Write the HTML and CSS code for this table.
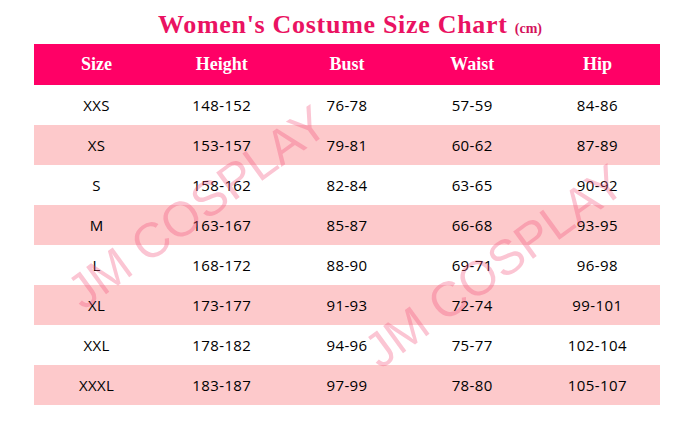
FILE: index.html
```html
<!DOCTYPE html>
<html>
<head>
<meta charset="utf-8">
<link rel="stylesheet" href="styles.css">
</head>
<body>
<div class="page">
  <h1 class="title">Women's Costume Size Chart <small class="unit">(cm)</small></h1>
  <div class="chart">
    <div class="row head">
      <div>Size</div><div>Height</div><div>Bust</div><div>Waist</div><div>Hip</div>
    </div>
    <div class="row"><div>XXS</div><div>148-152</div><div>76-78</div><div>57-59</div><div>84-86</div></div>
    <div class="row alt"><div>XS</div><div>153-157</div><div>79-81</div><div>60-62</div><div>87-89</div></div>
    <div class="row"><div>S</div><div>158-162</div><div>82-84</div><div>63-65</div><div>90-92</div></div>
    <div class="row alt"><div>M</div><div>163-167</div><div>85-87</div><div>66-68</div><div>93-95</div></div>
    <div class="row"><div>L</div><div>168-172</div><div>88-90</div><div>69-71</div><div>96-98</div></div>
    <div class="row alt"><div>XL</div><div>173-177</div><div>91-93</div><div>72-74</div><div>99-101</div></div>
    <div class="row"><div>XXL</div><div>178-182</div><div>94-96</div><div>75-77</div><div>102-104</div></div>
    <div class="row alt"><div>XXXL</div><div>183-187</div><div>97-99</div><div>78-80</div><div>105-107</div></div>
  </div>
  <span class="mark mark-a">JM COSPLAY</span>
  <span class="mark mark-b">JM COSPLAY</span>
</div>
</body>
</html>
```
FILE: styles.css
```css
html, body {
  margin: 0;
  padding: 0;
  background: #ffffff;
}
.page {
  position: relative;
  width: 700px;
  height: 430px;
  overflow: hidden;
}
.title {
  margin: 0;
  height: 44px;
  box-sizing: border-box;
  padding: 12px 0 0 0;
  font-family: "Liberation Serif", "Times New Roman", serif;
  font-weight: bold;
  font-size: 26px;
  line-height: 26px;
  letter-spacing: 0.7px;
  color: #ea1262;
  text-align: center;
}
.unit {
  font-size: 14px;
  letter-spacing: 0;
  color: #d4125c;
}
.chart {
  margin-left: 34px;
  width: 626px;
}
.row {
  display: grid;
  grid-template-columns: repeat(5, 1fr);
  height: 40px;
  align-items: center;
  text-align: center;
  font-family: "Open Sans", "Noto Sans", sans-serif;
  font-size: 15px;
  letter-spacing: 0.4px;
  color: #000000;
}
.row.alt {
  background: #fdc9cb;
}
.row.head {
  height: 41px;
  background: #ff0066;
  color: #ffffff;
  font-family: "Liberation Serif", "Times New Roman", serif;
  font-weight: bold;
  font-size: 18px;
  letter-spacing: 0;
}
.mark {
  position: absolute;
  font-family: "Liberation Sans", Arial, sans-serif;
  font-size: 49px;
  white-space: nowrap;
  color: rgba(242, 80, 122, 0.33);
  transform: translate(-50%, -50%) rotate(-36deg);
  pointer-events: none;
}
.mark-a {
  left: 197px;
  top: 207px;
}
.mark-b {
  left: 494px;
  top: 266px;
}
```
